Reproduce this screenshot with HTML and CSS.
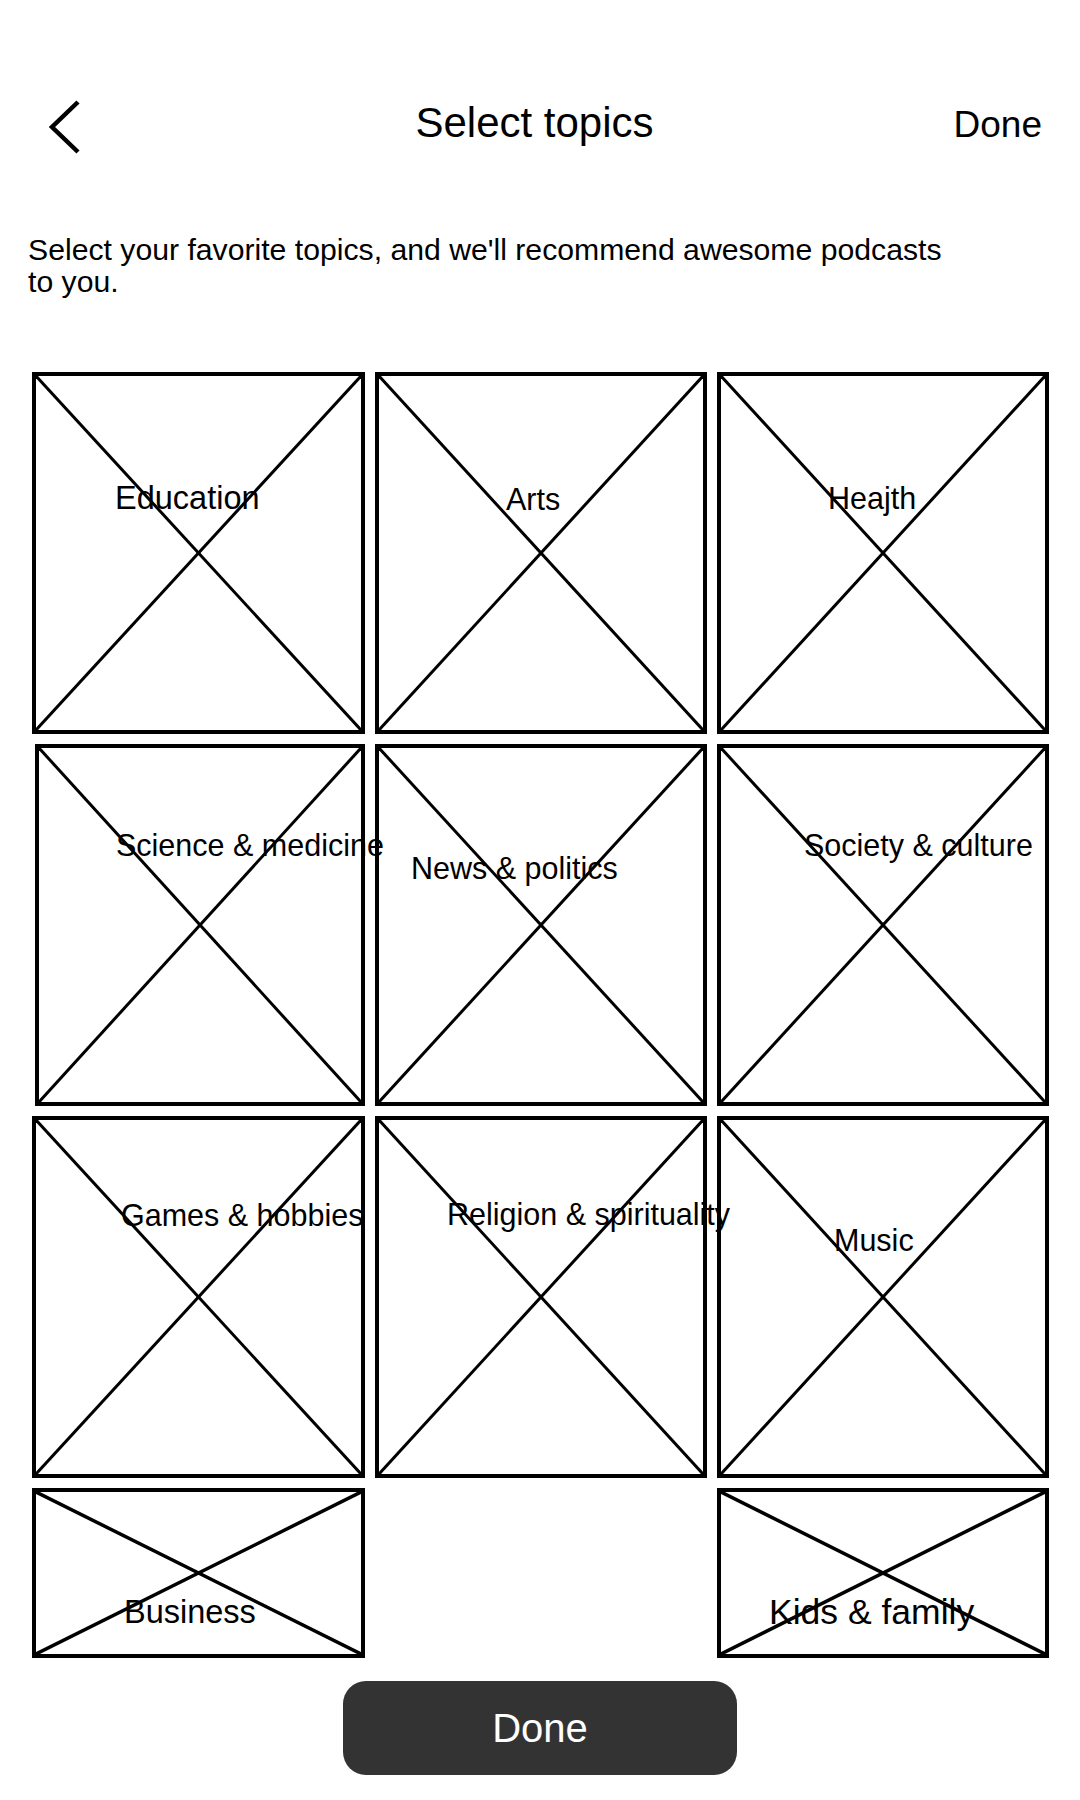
FILE: index.html
```html
<!DOCTYPE html>
<html lang="en">
<head>
    <meta charset="UTF-8">
    <meta name="viewport" content="width=device-width, initial-scale=1.0">
    <title>Select topics</title>
    <link rel="stylesheet" href="styles.css">
</head>
<body>
    <div class="topbar">
        <svg class="back" width="40" height="56" viewBox="0 0 40 56">
            <path d="M34 3 L8 28 L34 53"/>
        </svg>
        <div class="title">Select topics</div>
        <div class="done-link">Done</div>
    </div>

    <p class="intro">Select your favorite topics, and we'll recommend awesome podcasts to you.</p>

    <div class="topics">
        <div class="topic">
            <svg class="ph" viewBox="0 0 100 100" preserveAspectRatio="none"><line x1="0" y1="0" x2="100" y2="100"/><line x1="100" y1="0" x2="0" y2="100"/></svg>
            <span class="label education">Education</span>
        </div>
        <div class="topic">
            <svg class="ph" viewBox="0 0 100 100" preserveAspectRatio="none"><line x1="0" y1="0" x2="100" y2="100"/><line x1="100" y1="0" x2="0" y2="100"/></svg>
            <span class="label arts">Arts</span>
        </div>
        <div class="topic">
            <svg class="ph" viewBox="0 0 100 100" preserveAspectRatio="none"><line x1="0" y1="0" x2="100" y2="100"/><line x1="100" y1="0" x2="0" y2="100"/></svg>
            <span class="label health">Heajth</span>
        </div>

        <div class="topic inset">
            <svg class="ph" viewBox="0 0 100 100" preserveAspectRatio="none"><line x1="0" y1="0" x2="100" y2="100"/><line x1="100" y1="0" x2="0" y2="100"/></svg>
            <span class="label science">Science &amp; medicine</span>
        </div>
        <div class="topic">
            <svg class="ph" viewBox="0 0 100 100" preserveAspectRatio="none"><line x1="0" y1="0" x2="100" y2="100"/><line x1="100" y1="0" x2="0" y2="100"/></svg>
            <span class="label news">News &amp; politics</span>
        </div>
        <div class="topic">
            <svg class="ph" viewBox="0 0 100 100" preserveAspectRatio="none"><line x1="0" y1="0" x2="100" y2="100"/><line x1="100" y1="0" x2="0" y2="100"/></svg>
            <span class="label society">Society &amp; culture</span>
        </div>

        <div class="topic">
            <svg class="ph" viewBox="0 0 100 100" preserveAspectRatio="none"><line x1="0" y1="0" x2="100" y2="100"/><line x1="100" y1="0" x2="0" y2="100"/></svg>
            <span class="label games">Games &amp; hobbies</span>
        </div>
        <div class="topic">
            <svg class="ph" viewBox="0 0 100 100" preserveAspectRatio="none"><line x1="0" y1="0" x2="100" y2="100"/><line x1="100" y1="0" x2="0" y2="100"/></svg>
            <span class="label religion">Religion &amp; spirituality</span>
        </div>
        <div class="topic">
            <svg class="ph" viewBox="0 0 100 100" preserveAspectRatio="none"><line x1="0" y1="0" x2="100" y2="100"/><line x1="100" y1="0" x2="0" y2="100"/></svg>
            <span class="label music">Music</span>
        </div>

        <div class="topic short">
            <svg class="ph" viewBox="0 0 100 100" preserveAspectRatio="none"><line x1="0" y1="0" x2="100" y2="100"/><line x1="100" y1="0" x2="0" y2="100"/></svg>
            <span class="label business">Business</span>
        </div>
        <div class="topic short last-col">
            <svg class="ph" viewBox="0 0 100 100" preserveAspectRatio="none"><line x1="0" y1="0" x2="100" y2="100"/><line x1="100" y1="0" x2="0" y2="100"/></svg>
            <span class="label kids">Kids &amp; family</span>
        </div>
    </div>

    <button class="done-btn">Done</button>
</body>
</html>
```

FILE: styles.css
```css
body {
    margin: 0;
    background: #fff;
    color: #000;
    font-family: "Liberation Sans", Arial, sans-serif;
}

/* header */
.topbar {
    display: grid;
    grid-template-columns: 1fr auto 1fr;
    align-items: baseline;
    height: 50px;
    padding: 99px 38px 0 44px;
}
.back {
    align-self: start;
}
.back path {
    fill: none;
    stroke: #000;
    stroke-width: 4.5;
}
.title {
    font-size: 42px;
    line-height: 48px;
    margin-right: 17px;
}
.done-link {
    justify-self: end;
    font-size: 37px;
    line-height: 48px;
}

.intro {
    width: 935px;
    margin: 85px 0 0;
    padding: 0 28px;
    font-size: 30.2px;
    line-height: 32px;
}

/* topic grid */
.topics {
    display: grid;
    grid-template-columns: 333px 332px 332px;
    grid-template-rows: 362px 362px 362px 170px;
    column-gap: 10px;
    row-gap: 10px;
    margin-top: 74px;
    padding-left: 32px;
}
.topic {
    position: relative;
    box-sizing: border-box;
    border: 4px solid #000;
}
.topic.inset {
    margin-left: 3px;
}
.topic.last-col {
    grid-column: 3;
}
.ph {
    display: block;
    width: 100%;
    height: 100%;
}
.ph line {
    stroke: #000;
    stroke-width: 3;
    vector-effect: non-scaling-stroke;
}
.short .ph line {
    stroke-width: 3.5;
}

.label {
    position: absolute;
    z-index: 1;
    font-size: 30.5px;
    line-height: 1;
    white-space: nowrap;
}
.education { left: 79px; top: 106px; font-size: 32.5px; }
.arts { left: 127px; top: 108px; }
.health { left: 107px; top: 107px; }
.science { left: 77px; top: 82px; }
.news { left: 32px; top: 105px; }
.society { left: 83px; top: 82px; }
.games { left: 85px; top: 80px; }
.religion { left: 68px; top: 79px; }
.music { left: 113px; top: 105px; }
.business { left: 88px; top: 104px; font-size: 32.5px; }
.kids { left: 48px; top: 103px; font-size: 35.5px; }

.done-btn {
    display: block;
    width: 394px;
    height: 94px;
    margin: 23px auto 0;
    border: none;
    border-radius: 23px;
    background: #333;
    color: #fff;
    font-family: "Liberation Sans", Arial, sans-serif;
    font-size: 40px;
}
```
